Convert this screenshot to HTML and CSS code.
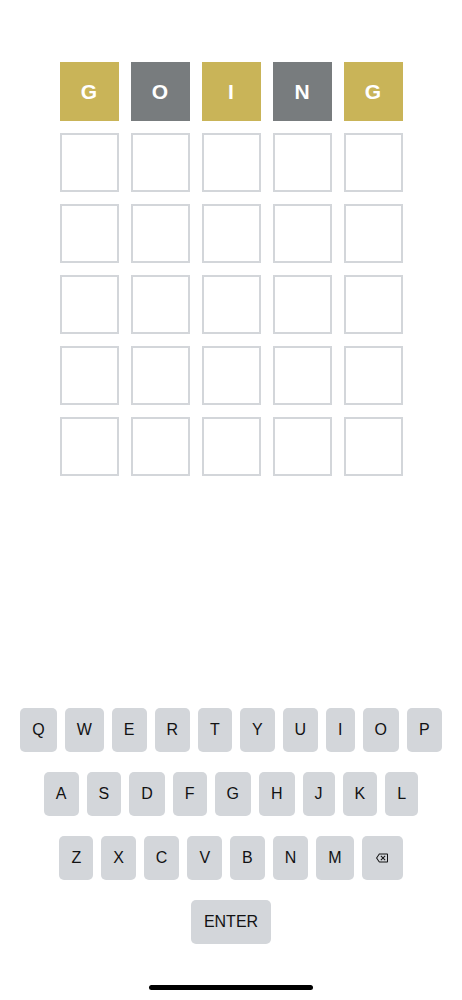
FILE: index.html
```
<!DOCTYPE html>
<html lang="en">
<head>
    <meta charset="UTF-8">
    <meta name="viewport" content="width=device-width, initial-scale=1.0">
    <title>Wordle</title>
    <link rel="stylesheet" href="styles.css">
</head>
<body>
    <div class="app">
        <!-- Guess board -->
        <div class="board">
            <div class="tile present">G</div>
            <div class="tile absent">O</div>
            <div class="tile present">I</div>
            <div class="tile absent">N</div>
            <div class="tile present">G</div>

            <div class="tile"></div><div class="tile"></div><div class="tile"></div><div class="tile"></div><div class="tile"></div>
            <div class="tile"></div><div class="tile"></div><div class="tile"></div><div class="tile"></div><div class="tile"></div>
            <div class="tile"></div><div class="tile"></div><div class="tile"></div><div class="tile"></div><div class="tile"></div>
            <div class="tile"></div><div class="tile"></div><div class="tile"></div><div class="tile"></div><div class="tile"></div>
            <div class="tile"></div><div class="tile"></div><div class="tile"></div><div class="tile"></div><div class="tile"></div>
        </div>

        <!-- On-screen keyboard -->
        <div class="keyboard">
            <div class="key-row">
                <button class="key">Q</button>
                <button class="key">W</button>
                <button class="key">E</button>
                <button class="key">R</button>
                <button class="key">T</button>
                <button class="key">Y</button>
                <button class="key">U</button>
                <button class="key">I</button>
                <button class="key">O</button>
                <button class="key">P</button>
            </div>
            <div class="key-row">
                <button class="key">A</button>
                <button class="key">S</button>
                <button class="key">D</button>
                <button class="key">F</button>
                <button class="key">G</button>
                <button class="key">H</button>
                <button class="key">J</button>
                <button class="key">K</button>
                <button class="key">L</button>
            </div>
            <div class="key-row">
                <button class="key">Z</button>
                <button class="key">X</button>
                <button class="key">C</button>
                <button class="key">V</button>
                <button class="key">B</button>
                <button class="key">N</button>
                <button class="key">M</button>
                <button class="key key-back" aria-label="Backspace">
                    <svg viewBox="0 0 24 24" width="12" height="12">
                        <path fill="#121213" d="M22 3H7c-.69 0-1.23.35-1.59.88L0 12l5.41 8.11c.36.53.9.89 1.59.89h15c1.1 0 2-.9 2-2V5c0-1.1-.9-2-2-2zm0 16H7.07L2.4 12l4.66-7H22v14zm-11.59-2L14 13.41 17.59 17 19 15.59 15.41 12 19 8.41 17.59 7 14 10.59 10.41 7 9 8.41 12.59 12 9 15.59z"/>
                    </svg>
                </button>
            </div>
            <div class="key-row">
                <button class="key key-enter">ENTER</button>
            </div>
        </div>

        <div class="home-bar"></div>
    </div>
</body>
</html>
```

FILE: styles.css
```
body {
    margin: 0;
    padding: 0;
    background-color: #fff;
    font-family: 'Liberation Sans', Arial, sans-serif;
    color: #121213;
}

.app {
    height: 100vh;
    display: flex;
    flex-direction: column;
}

/* Board */
.board {
    display: grid;
    grid-template-columns: repeat(5, 59px);
    grid-auto-rows: 59px;
    gap: 12px;
    justify-content: center;
    padding-top: 62px;
}

.tile {
    box-sizing: border-box;
    border: 2px solid #d3d6da;
    display: flex;
    align-items: center;
    justify-content: center;
    font-size: 21px;
    font-weight: 700;
    color: #fff;
}

.tile.present {
    background-color: #c9b458;
    border-color: #c9b458;
}

.tile.absent {
    background-color: #787c7e;
    border-color: #787c7e;
}

/* Keyboard */
.keyboard {
    margin-top: auto;
    display: flex;
    flex-direction: column;
    gap: 20px;
}

.key-row {
    display: flex;
    justify-content: center;
    gap: 8px;
}

.key {
    height: 44px;
    padding: 0 12px;
    border: none;
    border-radius: 5px;
    background-color: #d3d6da;
    color: #121213;
    font-family: 'Liberation Sans', Arial, sans-serif;
    font-size: 16px;
    display: flex;
    align-items: center;
    justify-content: center;
    cursor: pointer;
}

.key-back {
    padding: 0 14.5px;
}

.key-enter {
    padding: 0 13px;
}

.home-bar {
    width: 164px;
    height: 5px;
    border-radius: 3px;
    background-color: #000;
    margin: 41px auto 10px;
}
```
